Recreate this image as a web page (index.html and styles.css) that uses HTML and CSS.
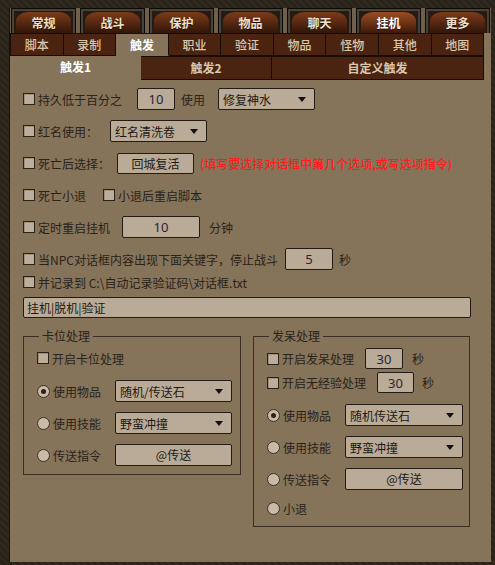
FILE: index.html
```html
<!DOCTYPE html>
<html lang="zh-CN">
<head>
  <meta charset="UTF-8">
  <title>挂机 - 触发</title>
  <link rel="stylesheet" href="styles.css">
</head>
<body>

  <div class="window">

    <div class="tabs-main">
      <div class="tab-main"><span>常规</span></div>
      <div class="tab-main"><span>战斗</span></div>
      <div class="tab-main"><span>保护</span></div>
      <div class="tab-main"><span>物品</span></div>
      <div class="tab-main"><span>聊天</span></div>
      <div class="tab-main active"><span>挂机</span></div>
      <div class="tab-main"><span>更多</span></div>
    </div>

    <div class="tabs-sub">
      <div class="tab-sub">脚本</div>
      <div class="tab-sub">录制</div>
      <div class="tab-sub active">触发</div>
      <div class="tab-sub">职业</div>
      <div class="tab-sub">验证</div>
      <div class="tab-sub">物品</div>
      <div class="tab-sub">怪物</div>
      <div class="tab-sub">其他</div>
      <div class="tab-sub">地图</div>
    </div>

    <div class="tabs-trig">
      <div class="tab-trig active">触发1</div>
      <div class="tab-trig">触发2</div>
      <div class="tab-trig wide">自定义触发</div>
    </div>

    <div class="content">
      <div class="row">
        <span class="check"></span><span>持久低于百分之</span>
        <span class="num num-a">10</span>
        <span class="after">使用</span>
        <span class="select sel-a">修复神水</span>
      </div>

      <div class="row">
        <span class="check"></span><span>红名使用：</span>
        <span class="select sel-b">红名清洗卷</span>
      </div>

      <div class="row">
        <span class="check"></span><span>死亡后选择：</span>
        <span class="button btn-a">回城复活</span>
        <span class="hint">(填写要选择对话框中第几个选项,或写选项指令)</span>
      </div>

      <div class="row">
        <span class="check"></span><span>死亡小退</span>
        <span class="check second"></span><span>小退后重启脚本</span>
      </div>

      <div class="row">
        <span class="check"></span><span>定时重启挂机</span>
        <span class="num num-b">10</span>
        <span class="after-b">分钟</span>
      </div>

      <div class="row tight">
        <span class="check"></span><span>当NPC对话框内容出现下面关键字，停止战斗</span>
        <span class="num num-c">5</span>
        <span class="after">秒</span>
      </div>

      <div class="row last">
        <span class="check"></span><span>并记录到 C:\自动记录验证码\对话框.txt</span>
      </div>

      <div class="keywords">挂机|脱机|验证</div>

      <div class="groups">
        <fieldset class="group group-left">
          <legend>卡位处理</legend>
          <div class="row g-first">
            <span class="check"></span><span>开启卡位处理</span>
          </div>
          <div class="row g-row">
            <span class="radio checked"></span><span class="rlabel">使用物品</span>
            <span class="select sel-g">随机/传送石</span>
          </div>
          <div class="row g-row">
            <span class="radio"></span><span class="rlabel">使用技能</span>
            <span class="select sel-g">野蛮冲撞</span>
          </div>
          <div class="row g-row">
            <span class="radio"></span><span class="rlabel">传送指令</span>
            <span class="button sel-g">@传送</span>
          </div>
        </fieldset>

        <fieldset class="group group-right">
          <legend>发呆处理</legend>
          <div class="row s-row s1">
            <span class="check"></span><span>开启发呆处理</span>
            <span class="num num-d">30</span>
            <span class="after-b">秒</span>
          </div>
          <div class="row s-row s2">
            <span class="check"></span><span>开启无经验处理</span>
            <span class="num num-e">30</span>
            <span class="after-c">秒</span>
          </div>
          <div class="row g-row">
            <span class="radio checked"></span><span class="rlabel">使用物品</span>
            <span class="select sel-h">随机传送石</span>
          </div>
          <div class="row g-row">
            <span class="radio"></span><span class="rlabel">使用技能</span>
            <span class="select sel-h">野蛮冲撞</span>
          </div>
          <div class="row g-row">
            <span class="radio"></span><span class="rlabel">传送指令</span>
            <span class="button sel-h">@传送</span>
          </div>
          <div class="row g-last">
            <span class="radio"></span><span>小退</span>
          </div>
        </fieldset>
      </div>
    </div>

  </div>

</body>
</html>
```

FILE: styles.css
```css
* {
  box-sizing: border-box;
}
body {
  margin: 0;
  padding: 8px 4px 3px 9px;
  width: 495px;
  height: 565px;
  overflow: hidden;
  background-color: #2a2319;
  background-image: repeating-linear-gradient(45deg, rgba(255,255,255,0.03) 0 2px, transparent 2px 5px);
  font-family: "Noto Sans CJK SC", "Noto Sans", sans-serif;
  font-size: 12px;
  color: #2b2218;
}
.window {
  width: 482px;
  height: 554px;
  background: #85745a;
  border-left: 1px solid #17110b;
}

/* top tabs */
.tabs-main {
  display: flex;
  gap: 4px;
  height: 25px;
  padding: 0 1px;
  background: #6f604b;
}
.tab-main {
  flex: 1;
  display: flex;
  padding: 3px 4px 0;
  background: #241c14;
  border: 1px solid #0d0906;
  border-bottom: 0;
  box-shadow: inset 2px 2px 0 #4a4236, inset -2px 0 0 #4a4236;
}
.tab-main span {
  flex: 1;
  border-radius: 12px 12px 0 0 / 9px 9px 0 0;
  background: linear-gradient(#7b3b1b, #5b2a12 45%, #30160a);
  color: #efe2cc;
  font-weight: bold;
  text-align: center;
  line-height: 21px;
  text-shadow: 0 1px 0 #1a0c05;
}
.tab-main.active span {
  background: linear-gradient(#9a4c22, #6e3416 50%, #3a1a0b);
  color: #ffffff;
}

/* second row */
.tabs-sub {
  display: flex;
  width: 474px;
  height: 23px;
}
.tab-sub {
  flex: 1;
  background: #4a2410;
  border: 1px solid #170d06;
  border-left: 0;
  color: #d9c8ad;
  font-weight: 500;
  text-align: center;
  line-height: 21px;
}
.tab-sub:first-child {
  border-left: 1px solid #170d06;
}
.tab-sub.active {
  background: #85745a;
  border-bottom-color: #85745a;
  color: #ffffff;
  font-weight: bold;
}

/* third row */
.tabs-trig {
  display: flex;
  width: 474px;
  height: 24px;
}
.tab-trig {
  width: 131px;
  background: #4a2410;
  border: 1px solid #170d06;
  border-left: 0;
  color: #d9c8ad;
  font-weight: bold;
  text-align: center;
  line-height: 22px;
}
.tab-trig.wide {
  flex: 1;
}
.tab-trig.active {
  background: #85745a;
  border: 0;
  color: #ffffff;
}

/* content */
.content {
  padding: 8px 0 0 13px;
}
.row {
  display: flex;
  align-items: center;
  height: 22px;
  margin-bottom: 10px;
  white-space: nowrap;
}
.row.tight {
  margin-bottom: 1px;
}
.row.last {
  margin-bottom: 4px;
}
.check {
  flex: none;
  width: 12px;
  height: 12px;
  margin-right: 3px;
  border: 1px solid #2a2117;
  background: #bcae9b;
  box-shadow: inset 1px 1px 0 #9c8e7c;
}
.check.second {
  margin-left: 17px;
}
.radio {
  flex: none;
  display: flex;
  align-items: center;
  justify-content: center;
  width: 13px;
  height: 13px;
  margin-right: 3px;
  border: 1px solid #3a3024;
  border-radius: 50%;
  background: #c9baa8;
}
.radio.checked::after {
  content: "";
  width: 5px;
  height: 5px;
  border-radius: 50%;
  background: #2a2218;
}
.rlabel {
  width: 62px;
}
.num,
.select,
.button,
.keywords {
  height: 22px;
  border: 1px solid #231b13;
  border-radius: 2px;
  background: #b9ab97;
  color: #1e1812;
}
.num {
  text-align: center;
  line-height: 20px;
  font-family: "Noto Sans", sans-serif;
  font-size: 13px;
  color: #2a2233;
}
.select {
  display: flex;
  align-items: center;
  justify-content: space-between;
  padding: 0 8px 0 4px;
}
.select::after {
  content: "";
  border-top: 5px solid #111;
  border-left: 4.5px solid transparent;
  border-right: 4.5px solid transparent;
}
.button {
  text-align: center;
  line-height: 20px;
}
.hint {
  margin-left: 6px;
  color: #ff1c1c;
  font-weight: 500;
}

.num-a { width: 38px; margin-left: 15px; }
.num-b { width: 78px; margin-left: 12px; }
.num-c { width: 48px; margin-left: 7px; }
.num-d { width: 38px; height: 21px; margin-left: 11px; }
.num-e { width: 37px; height: 21px; margin-left: 11px; }
.after { margin-left: 6px; }
.after-b { margin-left: 9px; }
.after-c { margin-left: 8px; }
.sel-a { width: 97px; margin-left: 13px; }
.sel-b { width: 97px; margin-left: 12px; }
.btn-a { width: 77px; height: 21px; margin-left: 7px; }
.sel-g { width: 117px; }
.sel-h { width: 118px; }

.keywords {
  width: 448px;
  height: 21px;
  padding-left: 3px;
  line-height: 19px;
}

/* group boxes */
.groups {
  display: flex;
  align-items: flex-start;
  gap: 12px;
  margin-top: 11px;
}
.group {
  margin: 0;
  padding: 0 0 8px 13px;
  border: 1px solid #3a2f22;
}
.group legend {
  margin-left: 2px;
  padding: 0 3px;
  line-height: 14px;
  color: #2b2218;
}
.group-left {
  width: 218px;
  padding-top: 4px;
}
.group-right {
  width: 217px;
  padding-top: 5px;
  padding-bottom: 7px;
}
.g-first {
  margin-bottom: 11px;
}
.g-row {
  margin-bottom: 10px;
}
.group-left .g-row:last-child {
  margin-bottom: 0;
}
.s-row {
  height: 21px;
}
.s1 {
  margin-bottom: 3px;
}
.s2 {
  margin-bottom: 11px;
}
.g-last {
  margin-top: -3px;
  margin-bottom: 0;
}
```
